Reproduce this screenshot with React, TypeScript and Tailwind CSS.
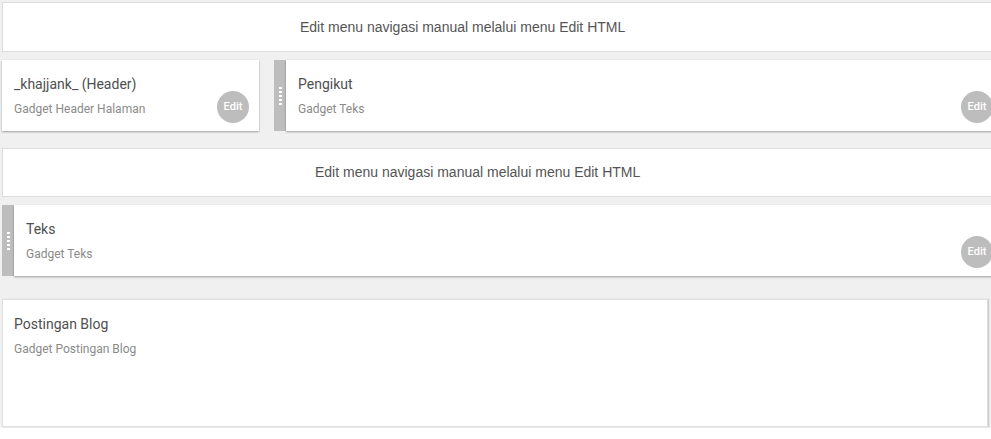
import React from "react";

const roboto = { fontFamily: "Roboto, 'Noto Sans', sans-serif" };

function Handle() {
  return (
    <div className="w-[12px] shrink-0 bg-[#bdbdbd] flex flex-col items-center justify-center gap-[2px]">
      {[0, 1, 2, 3, 4].map((i) => (
        <div key={i} className="w-[3px] h-[2px] bg-white" />
      ))}
    </div>
  );
}

function EditBtn() {
  return (
    <div
      className="absolute right-[10px] bottom-[8px] w-[32px] h-[32px] rounded-full bg-[#bdbdbd] text-white text-[11px] font-medium flex items-center justify-center"
      style={roboto}
    >
      Edit
    </div>
  );
}

function Card({ title, sub, className = "" }: { title: string; sub: string; className?: string }) {
  return (
    <div
      className={`relative bg-white h-[71px] pl-[12px] pt-[15px] shadow-[0_1px_2px_rgba(0,0,0,0.35)] ${className}`}
      style={roboto}
    >
      <div className="text-[14px] leading-[18px] text-[#4f4f4f]">{title}</div>
      <div className="text-[12px] leading-[16px] text-[#8a8a8a] mt-[8px]">{sub}</div>
      <EditBtn />
    </div>
  );
}

function NavBar({ pl, h }: { pl: string; h: string }) {
  return (
    <div
      className={`bg-white border border-[#dcdcdc] flex items-center text-[14px] text-[#555] ${pl} ${h}`}
      style={{ fontFamily: "'Liberation Sans', Arial, sans-serif" }}
    >
      Edit menu navigasi manual melalui menu Edit HTML
    </div>
  );
}

export default function App() {
  return (
    <div className="w-[991px] overflow-hidden">
      <div className="bg-[#f0f0f0] pt-[2px] pb-[1px] w-[1010px] pl-[2px] flex flex-col">
        <NavBar pl="pl-[297px]" h="h-[50px]" />
        <div className="flex mt-[8px] h-[71px]">
          <Card title="_khajjank_ (Header)" sub="Gadget Header Halaman" className="w-[257px]" />
          <div className="w-[15px] shrink-0" />
          <Handle />
          <Card title="Pengikut" sub="Gadget Teks" className="w-[717px]" />
        </div>
        <div className="mt-[17px]">
          <NavBar pl="pl-[312px]" h="h-[49px]" />
        </div>
        <div className="flex mt-[8px] h-[71px]">
          <Handle />
          <Card title="Teks" sub="Gadget Teks" className="w-[989px]" />
        </div>
        <div
          className="mt-[23px] w-[986px] h-[128px] bg-white border border-[#e0e0e0] shadow-[1px_0_1px_rgba(0,0,0,0.15)] pl-[11px] pt-[15px]"
          style={roboto}
        >
          <div className="text-[14px] leading-[18px] text-[#4f4f4f]">Postingan Blog</div>
          <div className="text-[12px] leading-[16px] text-[#8a8a8a] mt-[8px]">Gadget Postingan Blog</div>
        </div>
      </div>
    </div>
  );
}
